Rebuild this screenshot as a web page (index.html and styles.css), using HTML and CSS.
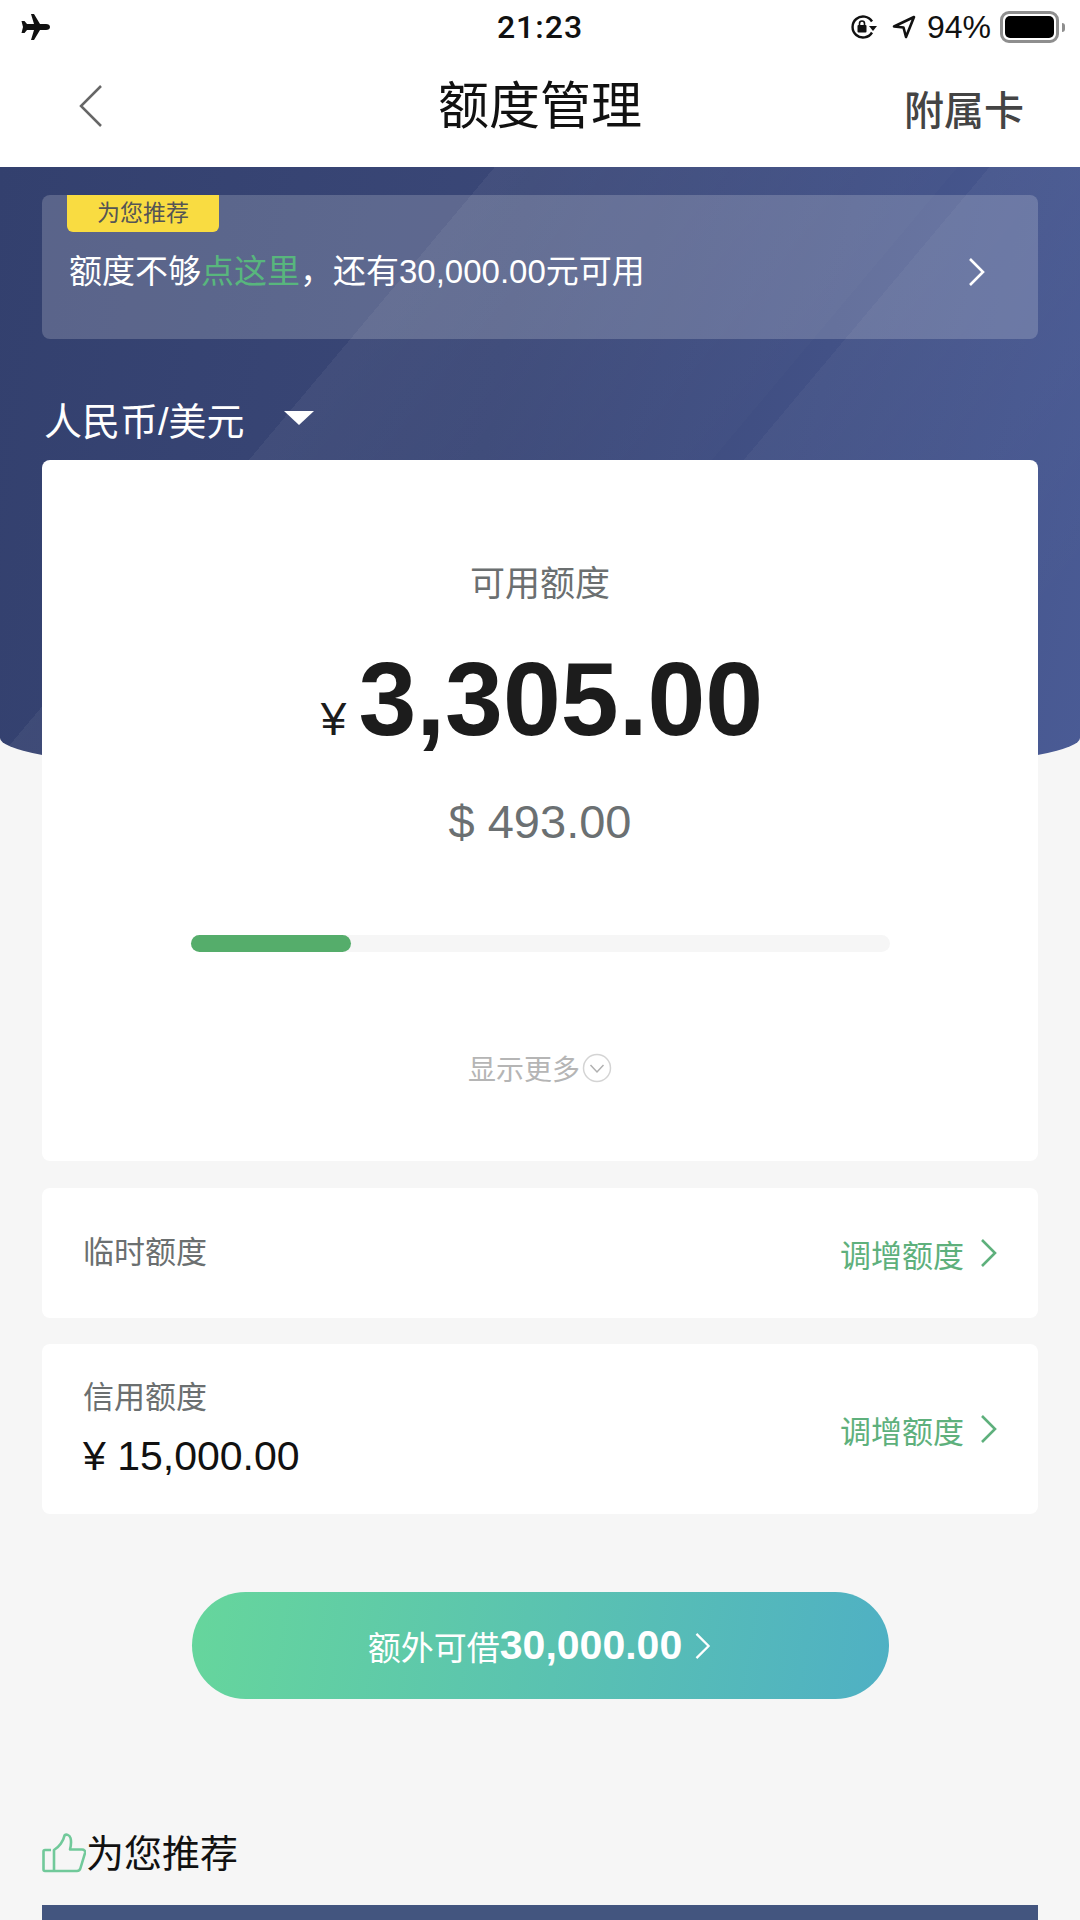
FILE: index.html
```html
<!DOCTYPE html>
<html lang="zh-CN">
<head>
    <meta charset="UTF-8">
    <meta name="viewport" content="width=device-width, initial-scale=1.0">
    <title>额度管理</title>
    <link rel="stylesheet" href="styles.css">
</head>
<body>

    <!-- Status bar -->
    <div class="status-bar">
        <svg class="icon-plane" viewBox="0 0 30 26"><path d="M11 0h3l6 10h6c2.500 0 4 1.300 4 3s-1.500 3-4 3h-6l-6 10h-3l3-10H7l-2.500 3H1.500L3 13 1.500 7h3L7 10h7z"/></svg>
        <span class="status-time">21:23</span>
        <div class="status-right">
            <svg class="icon-lock" viewBox="0 0 28 24"><path d="M22 17.500A10.500 10.500 0 1 1 22 6.500" fill="none" stroke="#111" stroke-width="2.400"/><path d="M19 11h8l-4 5z" fill="#111"/><rect x="7.500" y="10" width="9" height="7.500" rx="1" fill="#111"/><path d="M9.500 10V8.500a2.500 2.500 0 0 1 5 0V10" fill="none" stroke="#111" stroke-width="1.600"/></svg>
            <svg class="icon-arrow" viewBox="0 0 24 24"><path d="M2 11.500 22 2l-8 20-2.500-9.500z" fill="none" stroke="#111" stroke-width="2.600" stroke-linejoin="round"/></svg>
            <span class="status-batt">94%</span>
            <div class="battery"><div class="battery-level"></div></div>
            <div class="battery-nub"></div>
        </div>
    </div>

    <!-- Nav -->
    <div class="nav">
        <svg class="nav-back" viewBox="0 0 24 42"><path d="M22 1 2 21l20 20" fill="none" stroke="#666" stroke-width="2.500"/></svg>
        <h1 class="nav-title">额度管理</h1>
        <span class="nav-right">附属卡</span>
    </div>

    <div class="main">
        <!-- decorative background behind the top cards -->
        <div class="hero-bg">
            <div class="hero-shine-a"></div>
            <div class="hero-shine-b"></div>
        </div>

        <div class="promo">
            <span class="promo-tag">为您推荐</span>
            <div class="promo-row">
                <p class="promo-text">额度不够<span class="promo-link">点这里</span>，还有30,000.00元可用</p>
                <svg class="promo-arrow" viewBox="0 0 18 30"><path d="M2 2l13 13L2 28" fill="none" stroke="#fff" stroke-width="2.600"/></svg>
            </div>
        </div>

        <div class="currency">
            <span>人民币/美元</span>
            <div class="currency-caret"></div>
        </div>

        <div class="quota-card">
            <p class="quota-label">可用额度</p>
            <p class="quota-amount"><span class="quota-yen">¥</span>3,305.00</p>
            <p class="quota-usd">$ 493.00</p>
            <div class="progress"><div class="progress-fill"></div></div>
            <div class="show-more">
                <span>显示更多</span>
                <svg class="show-more-icon" viewBox="0 0 30 30"><circle cx="15" cy="15" r="13.500" fill="none" stroke="#d4d4d4" stroke-width="1.500"/><path d="M8.500 12l6.500 7 6.500-7" fill="none" stroke="#b0b0b0" stroke-width="1.500"/></svg>
            </div>
        </div>

        <div class="row row-temp">
            <span class="row-label">临时额度</span>
            <div class="row-action">
                <span>调增额度</span>
                <svg class="row-arrow" viewBox="0 0 18 30"><path d="M2 2l13 13L2 28" fill="none" stroke="#5eb07c" stroke-width="2.600"/></svg>
            </div>
        </div>

        <div class="row row-credit">
            <div>
                <div class="row-label">信用额度</div>
                <div class="row-value">¥ 15,000.00</div>
            </div>
            <div class="row-action">
                <span>调增额度</span>
                <svg class="row-arrow" viewBox="0 0 18 30"><path d="M2 2l13 13L2 28" fill="none" stroke="#5eb07c" stroke-width="2.600"/></svg>
            </div>
        </div>

        <div class="borrow-btn">
            <span>额外可借</span><strong class="borrow-num">30,000.00</strong>
            <svg class="borrow-arrow" viewBox="0 0 18 30"><path d="M2 2l13 13L2 28" fill="none" stroke="#fff" stroke-width="2.400"/></svg>
        </div>

        <div class="rec-head">
            <svg class="rec-icon" viewBox="0 0 44 40"><path d="M9 17H3a1.500 1.500 0 0 0-1.500 1.500v18A1.500 1.500 0 0 0 3 38h32c2 0 3-1 3.500-3L43 20c.5-2-.8-3.500-3-3.500H28c1-4 1.500-8 .5-11.500C27.500 1.500 24 1 22.500 2.500 21.500 8 17 14 12 17v21" fill="none" stroke="#71c99a" stroke-width="2.600" stroke-linejoin="round"/></svg>
            <span>为您推荐</span>
        </div>

        <div class="rec-card"></div>
    </div>

</body>
</html>
```

FILE: styles.css
```css
html, body {
    margin: 0;
    padding: 0;
}
body {
    width: 1080px;
    height: 1920px;
    overflow: hidden;
    background-color: #f6f6f6;
    font-family: "Liberation Sans", "Noto Sans CJK SC", sans-serif;
    color: #111;
}
p, h1 {
    margin: 0;
    font-weight: normal;
}
svg {
    display: block;
    flex: none;
}

/* status bar */
.status-bar {
    height: 54px;
    background-color: #fff;
    display: flex;
    align-items: center;
    justify-content: space-between;
    position: relative;
    padding: 0 15px 0 20px;
}
.icon-plane {
    width: 30px;
    height: 26px;
    fill: #111;
}
.status-time {
    position: absolute;
    left: 0;
    right: 0;
    text-align: center;
    font-family: Roboto, sans-serif;
    font-size: 32px;
    font-weight: 500;
    letter-spacing: 1px;
}
.status-right {
    display: flex;
    align-items: center;
}
.icon-lock {
    width: 28px;
    height: 24px;
    margin-right: 14px;
}
.icon-arrow {
    width: 24px;
    height: 24px;
    margin-right: 11px;
}
.status-batt {
    font-size: 32px;
    margin-right: 9px;
}
.battery {
    width: 49px;
    height: 22px;
    padding: 2px;
    border: 3px solid #8e8e8e;
    border-radius: 9px;
    display: flex;
}
.battery-level {
    width: 100%;
    background-color: #000;
    border-radius: 5px;
}
.battery-nub {
    width: 3px;
    height: 9px;
    margin-left: 3px;
    background-color: #8e8e8e;
    border-radius: 0 3px 3px 0;
}

/* nav */
.nav {
    height: 113px;
    background-color: #fff;
    display: flex;
    align-items: center;
    justify-content: space-between;
    position: relative;
    padding: 0 56px 0 79px;
}
.nav-back {
    width: 24px;
    height: 42px;
    margin-bottom: 10px;
}
.nav-title {
    position: absolute;
    left: 0;
    right: 0;
    bottom: 30px;
    text-align: center;
    font-size: 51px;
    line-height: 60px;
}
.nav-right {
    font-size: 40px;
    font-weight: 500;
    color: #444;
    margin-bottom: 6px;
}

/* main */
.main {
    position: relative;
    padding: 28px 42px 0;
}
.hero-bg {
    position: absolute;
    left: 0;
    top: 0;
    width: 1080px;
    height: 615px;
    overflow: hidden;
    background: linear-gradient(100deg, #33406e 0%, #3a4777 45%, #4a5b95 100%);
    border-radius: 0 0 50% 50% / 0 0 44px 44px;
}
.hero-shine-a {
    position: absolute;
    left: 0;
    top: 0;
    width: 1080px;
    height: 615px;
    background: linear-gradient(130deg, transparent 0, transparent 31%, rgba(255, 255, 255, 0.05) 31%, rgba(255, 255, 255, 0.01) 60%, transparent 60%);
}
.hero-shine-b {
    position: absolute;
    left: 0;
    top: 0;
    width: 1080px;
    height: 615px;
    background: linear-gradient(130deg, transparent 0, transparent 62%, rgba(255, 255, 255, 0.035) 62%, transparent 90%);
}

.promo {
    position: relative;
    height: 144px;
    background-color: rgba(255, 255, 255, 0.19);
    border-radius: 8px;
    margin-bottom: 56px;
}
.promo-tag {
    display: block;
    width: 152px;
    height: 37px;
    margin-left: 25px;
    background-color: #f9dc41;
    border-radius: 0 0 6px 6px;
    color: #555;
    font-size: 23px;
    line-height: 36px;
    text-align: center;
}
.promo-row {
    display: flex;
    align-items: center;
    justify-content: space-between;
    padding: 17px 52px 0 27px;
}
.promo-text {
    font-size: 33px;
    line-height: 46px;
    color: #fff;
}
.promo-link {
    color: #58b67d;
}
.promo-arrow {
    width: 18px;
    height: 30px;
}

.currency {
    position: relative;
    display: flex;
    align-items: center;
    height: 46px;
    margin-bottom: 19px;
    padding-left: 2px;
    font-size: 38px;
    color: #fff;
}
.currency-caret {
    width: 0;
    height: 0;
    margin-left: 39px;
    border-left: 15px solid transparent;
    border-right: 15px solid transparent;
    border-top: 14px solid #fff;
}

.quota-card {
    position: relative;
    height: 701px;
    background-color: #fff;
    border-radius: 8px;
    display: flex;
    flex-direction: column;
    align-items: center;
    padding-top: 101px;
    box-sizing: border-box;
    margin-bottom: 27px;
}
.quota-label {
    font-size: 35px;
    line-height: 46px;
    color: #6b6f70;
}
.quota-amount {
    font-size: 104px;
    line-height: 116px;
    font-weight: bold;
    color: #1c1c1c;
    margin-top: 34px;
    margin-left: 4px;
}
.quota-yen {
    font-size: 46px;
    font-weight: normal;
    margin-right: 12px;
}
.quota-usd {
    font-size: 47px;
    line-height: 56px;
    color: #6b7072;
    margin-top: 17px;
}
.progress {
    width: 699px;
    height: 17px;
    margin-top: 85px;
    background-color: #f6f6f6;
    border-radius: 9px;
}
.progress-fill {
    width: 160px;
    height: 17px;
    background-color: #55ad6b;
    border-radius: 9px;
}
.show-more {
    display: flex;
    align-items: center;
    margin-top: 96px;
    font-size: 28px;
    color: #b5b5b5;
}
.show-more-icon {
    width: 30px;
    height: 30px;
    margin-left: 2px;
}

.row {
    background-color: #fff;
    border-radius: 8px;
    display: flex;
    align-items: center;
    justify-content: space-between;
    padding: 0 40px 0 41px;
    margin-bottom: 26px;
}
.row-temp {
    height: 130px;
}
.row-credit {
    height: 170px;
}
.row-label {
    font-size: 31px;
    line-height: 40px;
    color: #6b6f70;
}
.row-value {
    font-size: 41px;
    line-height: 50px;
    margin-top: 13px;
    color: #111;
}
.row-action {
    display: flex;
    align-items: center;
    font-size: 31px;
    color: #5eb07c;
}
.row-arrow {
    width: 18px;
    height: 30px;
    margin-left: 16px;
}

.borrow-btn {
    width: 697px;
    height: 107px;
    margin: 78px auto 0;
    border-radius: 54px;
    background: linear-gradient(100deg, #66d69c 0%, #4fb0c4 100%);
    color: #fff;
    display: flex;
    align-items: center;
    justify-content: center;
    font-size: 33px;
}
.borrow-num {
    font-size: 41px;
}
.borrow-arrow {
    width: 18px;
    height: 28px;
    margin-left: 12px;
}

.rec-head {
    display: flex;
    align-items: center;
    height: 50px;
    margin-top: 126px;
    font-size: 38px;
}
.rec-icon {
    width: 44px;
    height: 40px;
    margin-top: 6px;
}
.rec-card {
    height: 40px;
    margin-top: 30px;
    background-color: #43557f;
}
```
